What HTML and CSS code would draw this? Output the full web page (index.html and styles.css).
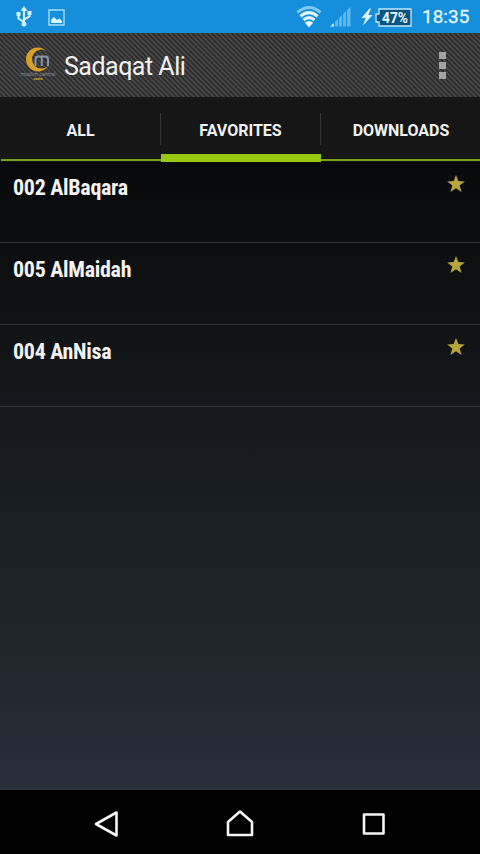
FILE: index.html
```html
<!DOCTYPE html>
<html lang="en">
<head>
    <meta charset="UTF-8">
    <meta name="viewport" content="width=device-width, initial-scale=1.0">
    <title>Sadaqat Ali</title>
    <link rel="stylesheet" href="styles.css">
</head>
<body>

<div class="status-bar">
    <svg class="usb" width="18" height="22" viewBox="0 0 18 22" fill="none" stroke="#d3f1ff" stroke-width="2">
        <path d="M9 3v15M9 16L3.500 12.500V9M9 13.500l5.500-3V7"/>
        <path d="M9 0l3.500 5h-7zM1.500 6h4v4h-4zM12.500 5h4v4h-4z" fill="#d3f1ff" stroke="none"/>
        <circle cx="9" cy="18" r="2.500" fill="#d3f1ff" stroke="none"/>
    </svg>
    <svg class="picture" width="17" height="17" viewBox="0 0 17 17">
        <path d="M1 1h15v15H1z" fill="none" stroke="#a9ddf8" stroke-width="1.400"/>
        <path d="M3 14V11l3-3 3 3 2.500-1.500L14 12v2z" fill="#e2f6ff"/>
    </svg>
    <span class="spacer"></span>
    <svg class="wifi" width="26" height="22" viewBox="0 0 26 22" fill="none" stroke="#e2f7ff" stroke-width="3">
        <path d="M1.500 6.500Q13-3.500 24.500 6.500" stroke="#80c8ef"/>
        <path d="M4.500 10.300Q13 3 21.500 10.300"/>
        <path d="M7.500 14Q13 9.300 18.500 14"/>
        <path d="M8.800 16.700Q13 13.200 17.200 16.700L13 21.500z" fill="#e2f7ff" stroke="none"/>
    </svg>
    <svg class="signal" width="21" height="20" viewBox="0 0 21 20" fill="#62b7e9">
        <path d="M0 19.500L4 16v3.500z" fill="#d3f1ff"/>
        <path d="M5 15l3-3v7.500H5zM9 11l3-3v11.500H9zM13 7l3-3v15.500h-3zM17 3l3.500-3v19.500H17z"/>
    </svg>
    <svg class="bolt" width="12" height="18" viewBox="0 0 12 18">
        <path d="M8.500 .5L.5 10h4.200L2 17.500l9.500-10.500H7.300L10 .5z" fill="#e2f7ff"/>
    </svg>
    <svg class="battery" width="37" height="19" viewBox="0 0 37 19">
        <path d="M4 1h32v17H4v-4H1V6h3z" fill="#0b5382" stroke="#c2e9fb" stroke-width="1.300"/>
        <text x="20" y="14.500" text-anchor="middle" textLength="26" lengthAdjust="spacingAndGlyphs">47%</text>
    </svg>
    <span class="clock">18:35</span>
</div>

<header class="action-bar">
    <svg class="logo" width="38" height="36" viewBox="0 0 38 36">
        <path d="M27.500 4A12 12 0 1 0 29 19A9.500 9.500 0 1 1 27.500 4z" fill="#d9a026"/>
        <path d="M16.500 19V12q0-2.500 2.500-2.500h7.500q2.500 0 2.500 2.500v7M22.800 10v9" fill="none" stroke="#8698a8" stroke-width="2"/>
        <text class="logo-name" x="19" y="28.500" text-anchor="middle" textLength="35" lengthAdjust="spacingAndGlyphs">muslim central</text>
        <text class="logo-sub" x="19" y="33" text-anchor="middle" textLength="9" lengthAdjust="spacingAndGlyphs">audio</text>
    </svg>
    <h1>Sadaqat Ali</h1>
    <div class="overflow"><i></i><i></i><i></i></div>
</header>

<nav class="tabs">
    <div class="tab"><span>ALL</span></div>
    <div class="tab active"><span>FAVORITES</span></div>
    <div class="tab"><span>DOWNLOADS</span></div>
</nav>

<main class="list">
    <div class="row">
        <span class="title">002 AlBaqara</span>
        <svg class="star" width="18" height="18" viewBox="0 0 18 18"><path d="M9 0l2.300 6.100 6.500.3-5.100 4 1.800 6.500L9 13.300l-5.500 3.600 1.800-6.500-5.100-4 6.500-.3z"/></svg>
    </div>
    <div class="row">
        <span class="title">005 AlMaidah</span>
        <svg class="star" width="18" height="18" viewBox="0 0 18 18"><path d="M9 0l2.300 6.100 6.500.3-5.100 4 1.800 6.500L9 13.300l-5.500 3.600 1.800-6.500-5.100-4 6.500-.3z"/></svg>
    </div>
    <div class="row">
        <span class="title">004 AnNisa</span>
        <svg class="star" width="18" height="18" viewBox="0 0 18 18"><path d="M9 0l2.300 6.100 6.500.3-5.100 4 1.800 6.500L9 13.300l-5.500 3.600 1.800-6.500-5.100-4 6.500-.3z"/></svg>
    </div>
</main>

<footer class="nav-bar">
    <svg width="28" height="30" viewBox="0 0 28 30"><path d="M4 15L24.500 3.500v23z"/></svg>
    <svg width="28" height="30" viewBox="0 0 28 30"><path d="M2 26V13L14 2.500 26 13v13z"/></svg>
    <svg width="28" height="30" viewBox="0 0 28 30"><path d="M4 5.500h19.500v19H4z"/></svg>
</footer>

</body>
</html>
```
FILE: styles.css
```css
body {
    font-family: Roboto, sans-serif;
    margin: 0;
    height: 854px;
    display: flex;
    flex-direction: column;
    background-color: #000;
    color: #f2f2f2;
    overflow: hidden;
}
svg {
    display: block;
    flex: none;
    overflow: visible;
}
/* status bar */
.status-bar {
    height: 33px;
    display: flex;
    align-items: center;
    padding: 1px 11px 0 15px;
    box-sizing: border-box;
    background-color: #158edb;
}
.picture {
    margin-left: 15px;
}
.spacer {
    flex: 1;
}
.signal {
    margin-left: 8px;
}
.bolt {
    margin-left: 10px;
}
.battery {
    margin-left: 2px;
}
.battery text {
    font-size: 15px;
    font-weight: bold;
    fill: #e8f8ff;
}
.clock {
    margin-left: 10px;
    width: 47px;
    font-size: 19px;
    line-height: 34px;
    white-space: nowrap;
    color: #e2f7ff;
    -webkit-text-stroke: 0.3px #e2f7ff;
}
/* action bar */
.action-bar {
    height: 64px;
    display: flex;
    align-items: center;
    padding: 0 34px 0 19px;
    background: repeating-linear-gradient(45deg, #484848 0, #484848 1px, #2b2b2b 2px, #2b2b2b 3px, #484848 3.5px);
}
.logo {
    margin-top: -1px;
}
.logo-name {
    font-size: 6px;
    fill: #858c97;
}
.logo-sub {
    font-size: 4px;
    font-weight: bold;
    fill: #c9ae2a;
}
h1 {
    flex: 1;
    margin: 2px 0 0 7px;
    font-size: 25px;
    font-weight: normal;
    letter-spacing: -0.5px;
}
.overflow {
    display: flex;
    flex-direction: column;
    gap: 3px;
}
.overflow i {
    width: 7px;
    height: 7px;
    background-color: #a3a3a3;
}
/* tabs */
.tabs {
    height: 65px;
    display: flex;
    padding-left: 1px;
    margin-right: -1px;
    background-color: #161616;
}
.tab {
    flex: 1;
    display: flex;
    border-bottom: 2px solid #7ba01a;
    margin-bottom: 1px;
}
.tab span {
    flex: 1;
    height: 32px;
    margin-top: 16px;
    line-height: 35px;
    text-align: center;
    font-size: 16px;
    font-weight: bold;
    border-right: 1px solid #343434;
}
.tab:last-child span {
    border-right: none;
}
.tab.active {
    border-bottom: 8px solid #97c910;
    margin-bottom: 0;
}
/* list */
.list {
    flex: 1;
    background: linear-gradient(#08090b 0%, #101214 25%, #171b1f 45%, #20252c 75%, #2a2e39 100%);
}
.row {
    height: 81px;
    display: flex;
    justify-content: space-between;
    padding: 0 15px 0 13px;
    border-bottom: 1px solid #303236;
}
.row:first-child {
    height: 80px;
}
.title {
    margin-top: 14px;
    font-family: "Roboto Condensed", Roboto, sans-serif;
    font-stretch: condensed;
    font-size: 22px;
    line-height: 26px;
    font-weight: bold;
    letter-spacing: -0.3px;
}
.row:first-child .title {
    margin-top: 13px;
}
.star {
    margin-top: 13px;
    fill: #b9a53a;
}
/* navigation bar */
.nav-bar {
    height: 64px;
    display: flex;
    align-items: center;
    justify-content: center;
    gap: 106px;
    padding-top: 4px;
    box-sizing: border-box;
}
.nav-bar path {
    fill: none;
    stroke: #f5f5f5;
    stroke-width: 2.6;
    stroke-linejoin: round;
}
```
